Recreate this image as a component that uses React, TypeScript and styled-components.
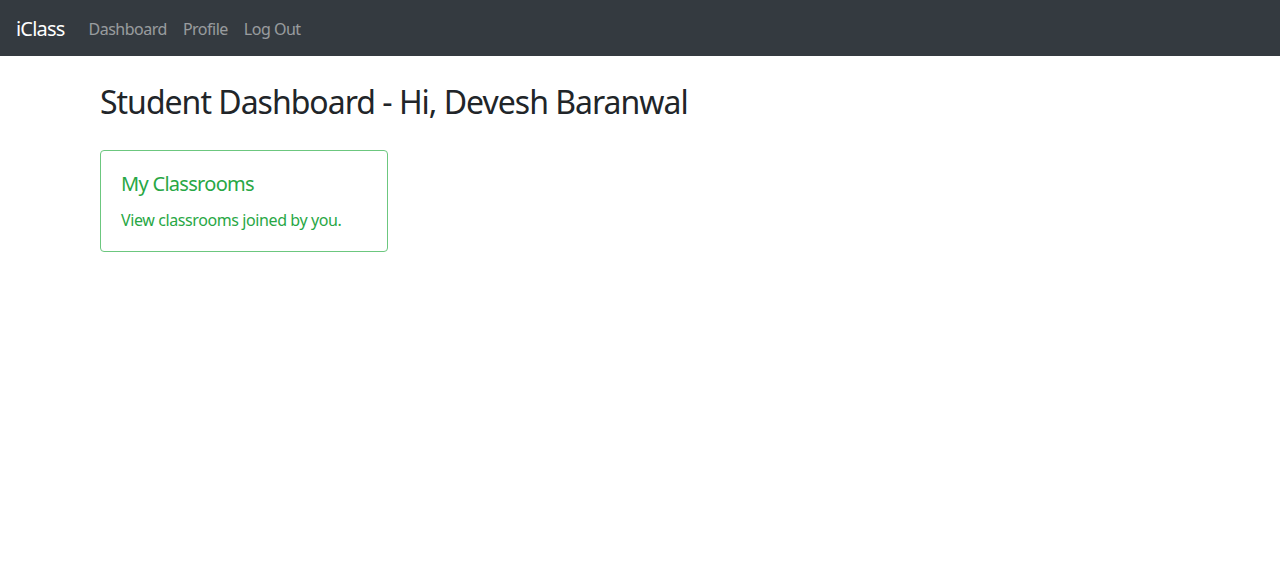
import React from 'react';
import styled, { createGlobalStyle } from 'styled-components';

const GlobalStyle = createGlobalStyle`
    body {
        margin: 0;
        background: #ffffff;
        color: #212529;
        font-family: "Noto Sans", "Open Sans", sans-serif;
        font-size: 16px;
        line-height: 1.5;
    }
`;

const Navbar = styled.nav`
    align-items: center;
    background-color: #343a40;
    box-sizing: border-box;
    display: flex;
    height: 56px;
    padding: 2px 16px 0;
`;

const Brand = styled.a`
    color: #ffffff;
    font-size: 20px;
    letter-spacing: -0.8px;
    margin-right: 16px;
    text-decoration: none;
`;

const NavLinks = styled.div`
    display: flex;
`;

const NavLink = styled.a`
    color: rgba(255, 255, 255, 0.5);
    font-size: 16px;
    letter-spacing: -0.5px;
    padding: 8px;
    text-decoration: none;
`;

const Container = styled.main`
    padding: 27px 100px 0;
`;

const Heading = styled.h1`
    font-size: 32px;
    font-weight: 400;
    letter-spacing: -1px;
    line-height: 1.2;
    margin: 0 0 29px;
`;

const Card = styled.div`
    border: 1px solid #6cc77f;
    border-radius: 4px;
    box-sizing: border-box;
    color: #28a745;
    height: 102px;
    padding: 21px 20px 0;
    width: 288px;
`;

const CardTitle = styled.h5`
    font-size: 20px;
    font-weight: 400;
    letter-spacing: -0.7px;
    line-height: 1.2;
    margin: 0 0 12px;
`;

const CardText = styled.p`
    font-size: 16px;
    letter-spacing: -0.4px;
    margin: 0;
`;

const App = () => (
    <>
        <GlobalStyle />
        <Navbar>
            <Brand href="#">iClass</Brand>
            <NavLinks>
                <NavLink href="#">Dashboard</NavLink>
                <NavLink href="#">Profile</NavLink>
                <NavLink href="#">Log Out</NavLink>
            </NavLinks>
        </Navbar>
        <Container>
            <Heading>Student Dashboard - Hi, Devesh Baranwal</Heading>
            <Card>
                <CardTitle>My Classrooms</CardTitle>
                <CardText>View classrooms joined by you.</CardText>
            </Card>
        </Container>
    </>
);

export default App;
